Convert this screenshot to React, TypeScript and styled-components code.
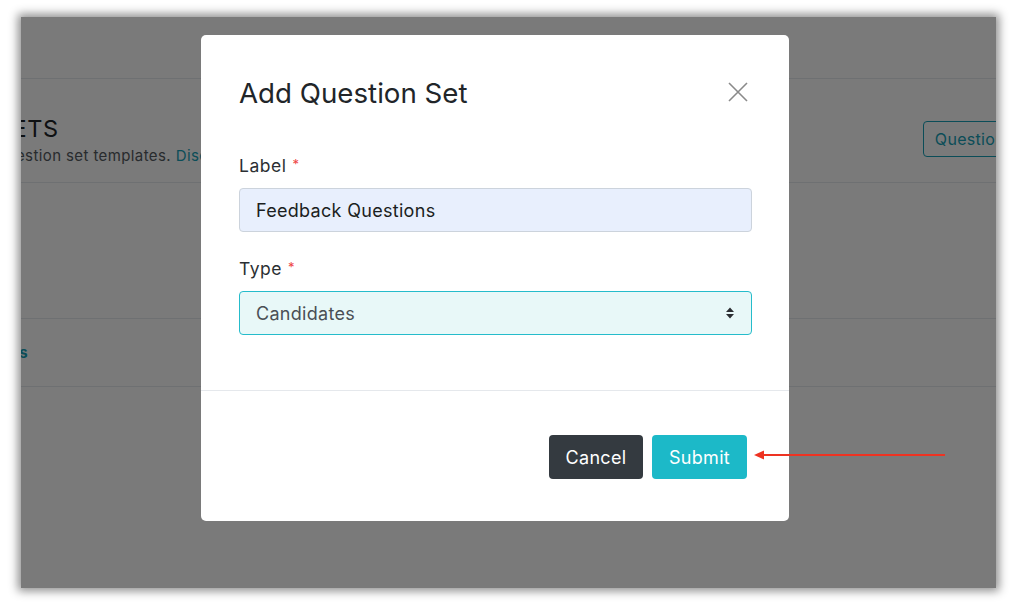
import styled, { createGlobalStyle } from "styled-components";

const GlobalStyle = createGlobalStyle`
  html, body {
    margin: 0;
    padding: 0;
    background: #ffffff;
    font-family: Inter, "Noto Sans", sans-serif;
  }
`;

const Canvas = styled.div`
  width: 1016px;
  height: 604px;
  padding: 17px 20px 16px 21px;
  box-sizing: border-box;
`;

const Frame = styled.div`
  position: relative;
  width: 975px;
  height: 571px;
  overflow: hidden;
  background: #ffffff;
  box-shadow: 0 0 9px 3px rgba(0, 0, 0, 0.45);
`;

// page behind the overlay
const Page = styled.div`
  display: flex;
  flex-direction: column;
  height: 100%;
`;

const Section = styled.div<{ $h: number }>`
  height: ${(p) => p.$h}px;
  border-bottom: 1px solid #e6eaee;
  box-sizing: border-box;
  display: flex;
  align-items: center;
  justify-content: space-between;
`;

const PageTitleBlock = styled.div`
  margin-left: -137px;
  margin-top: 18px;
`;

const PageTitle = styled.div`
  margin-left: -21px;
  font-size: 23.5px;
  letter-spacing: 0.6px;
  color: #212529;
  white-space: nowrap;
`;

const PageSub = styled.div`
  margin-left: 11px;
  font-size: 15px;
  letter-spacing: 0.4px;
  color: #555b61;
  margin-top: 3px;
  white-space: nowrap;
`;

const Link = styled.span`
  color: #17a2b8;
`;

const OutlineButton = styled.button`
  margin-right: -60px;
  margin-top: 16px;
  height: 36px;
  padding: 0 11px;
  border: 1.5px solid #17a2b8;
  border-radius: 4px;
  background: transparent;
  color: #17a2b8;
  font-family: inherit;
  font-size: 16px;
  letter-spacing: 0.3px;
  white-space: nowrap;
`;

const RowLink = styled.div`
  margin-left: -26px;
  font-size: 15px;
  font-weight: 700;
  color: #17a2b8;
`;

const Overlay = styled.div`
  position: absolute;
  inset: 0;
  background: rgba(0, 0, 0, 0.52);
  padding: 18px 0 0 180px;
`;

const Modal = styled.div`
  width: 588px;
  height: 486px;
  background: #ffffff;
  border-radius: 5px;
  display: flex;
  flex-direction: column;
`;

const Header = styled.div`
  display: flex;
  justify-content: space-between;
  align-items: flex-start;
  padding: 40px 40px 0 38px;
  height: 72px;
  box-sizing: border-box;
`;

const Title = styled.h2`
  margin: 0;
  font-size: 27.7px;
  font-weight: 400;
  line-height: 36px;
  color: #212529;
`;

const Close = styled.button`
  border: none;
  background: none;
  padding: 0;
  margin-top: 6px;
  width: 22px;
  height: 22px;
  display: flex;
  cursor: pointer;
`;

const Body = styled.div`
  padding: 46px 37px 0 38px;
  height: 284px;
  box-sizing: border-box;
  border-bottom: 1.5px solid #e5e8ec;
`;

const Field = styled.div`
  margin-bottom: 24px;
`;

const Label = styled.div`
  font-size: 17.5px;
  letter-spacing: 0.5px;
  color: #2b2f33;
  line-height: 22px;
  margin-bottom: 11px;
`;

const Star = styled.span`
  color: #ee4444;
  font-size: 13px;
  margin-left: 6px;
  vertical-align: 3px;
`;

const Input = styled.div<{ $select?: boolean }>`
  height: 44px;
  box-sizing: border-box;
  border-radius: 4px;
  border: 1.5px solid ${(p) => (p.$select ? "#25bccb" : "#ccd3dc")};
  background: ${(p) => (p.$select ? "#e8f8f8" : "#e8effd")};
  color: ${(p) => (p.$select ? "#4a4f55" : "#1b1e21")};
  display: flex;
  align-items: center;
  justify-content: space-between;
  padding: 0 16px;
  font-size: 18px;
  letter-spacing: 0.3px;
`;

const Footer = styled.div`
  flex: 1;
  display: flex;
  justify-content: flex-end;
  align-items: flex-start;
  gap: 9px;
  padding: 44px 42px 0 0;
`;

const Button = styled.button<{ $primary?: boolean }>`
  height: 44px;
  padding: 0 16px;
  border: none;
  border-radius: 4px;
  font-family: inherit;
  font-size: 18px;
  letter-spacing: 0.3px;
  color: #ffffff;
  background: ${(p) => (p.$primary ? "#1cb9c8" : "#343a40")};
  min-width: ${(p) => (p.$primary ? "95px" : "94px")};
`;

const Annotation = styled.svg`
  position: absolute;
  left: 733px;
  top: 432px;
`;

export default function App() {
  return (
    <Canvas>
      <GlobalStyle />
      <Frame>
        <Page>
          <Section $h={62} />
          <Section $h={104}>
            <PageTitleBlock>
              <PageTitle>QUESTION SETS</PageTitle>
              <PageSub>
                Manage your question set templates. <Link>Discover more</Link>
              </PageSub>
            </PageTitleBlock>
            <OutlineButton>Question Sets</OutlineButton>
          </Section>
          <Section $h={136} />
          <Section $h={68}>
            <RowLink>Sets</RowLink>
          </Section>
        </Page>
        <Overlay>
          <Modal>
            <Header>
              <Title>Add Question Set</Title>
              <Close aria-label="Close">
                <svg width="22" height="22" viewBox="0 0 22 22">
                  <path
                    d="M2 2 L20 20 M20 2 L2 20"
                    stroke="#8a8a8a"
                    strokeWidth="1.6"
                    fill="none"
                  />
                </svg>
              </Close>
            </Header>
            <Body>
              <Field>
                <Label>
                  Label<Star>*</Star>
                </Label>
                <Input>Feedback Questions</Input>
              </Field>
              <Field>
                <Label>
                  Type<Star>*</Star>
                </Label>
                <Input $select>
                  Candidates
                  <svg width="10" height="14" viewBox="0 0 10 14">
                    <path d="M1 6 L5 1.5 L9 6 Z M1 8 L5 12.5 L9 8 Z" fill="#2b2f33" />
                  </svg>
                </Input>
              </Field>
            </Body>
            <Footer>
              <Button>Cancel</Button>
              <Button $primary>Submit</Button>
            </Footer>
          </Modal>
        </Overlay>
        <Annotation width="192" height="12" viewBox="0 0 192 12">
          <line x1="6" y1="6" x2="191" y2="6" stroke="#ee3322" strokeWidth="2" />
          <path d="M0 6 L10 1.5 L10 10.5 Z" fill="#ee3322" />
        </Annotation>
      </Frame>
    </Canvas>
  );
}
